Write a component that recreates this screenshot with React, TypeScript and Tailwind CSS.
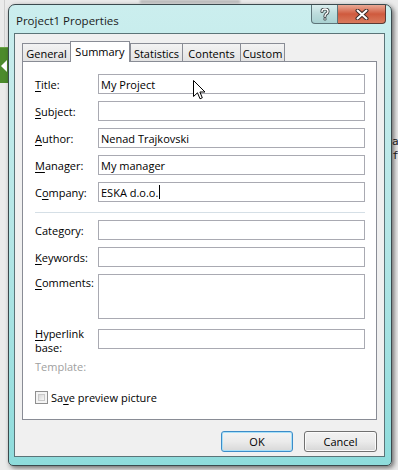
import React from "react";

const F = "font-['Segoe_UI','Open_Sans','Noto_Sans',sans-serif]";

function L({ pre = "", u, post = "" }: { pre?: string; u: string; post?: string }) {
  return (
    <span>
      {pre}
      <span className="underline underline-offset-[2px] decoration-1">{u}</span>
      {post}
    </span>
  );
}

function Field({ label, value, caret }: { label: React.ReactNode; value?: string; caret?: boolean }) {
  return (
    <div className="flex items-center h-[20px]">
      <div className="w-[63px] shrink-0 text-black">{label}</div>
      <div className="flex-1 h-[20px] border border-[#a9aab2] bg-white flex items-center pl-[2px] text-black whitespace-nowrap">
        {value}
        {caret && <span className="inline-block w-px h-[14px] bg-black ml-[1px]" />}
      </div>
    </div>
  );
}

function Tab({ label, w, selected, last }: { label: React.ReactNode; w: string; selected?: boolean; last?: boolean }) {
  if (selected) {
    return (
      <div className={`${w} h-[21px] -mb-px relative z-10 bg-white border-t border-l border-r border-[#898c95] flex justify-center pt-[2px] text-black`}>
        {label}
      </div>
    );
  }
  return (
    <div
      className={`${w} h-[18px] border-t border-l ${last ? "border-r" : ""} border-[#898c95] bg-gradient-to-b from-[#f3f3f3] to-[#e3e3e3] flex justify-center pt-[2px] text-black`}
    >
      {label}
    </div>
  );
}

export default function App() {
  return (
    <div className={`${F} relative w-[398px] h-[470px] overflow-hidden bg-[#ebebeb] text-[11px] leading-[15px]`}>
      {/* desktop background bits */}
      <div className="absolute left-0 top-[47px] w-[10px] h-[36px] bg-[#4c8a2c] border-t border-[#6aa445]">
        <svg width="10" height="36" className="absolute left-0 top-0">
          <polygon points="1,18 7,12 7,24" fill="#ffffff" />
        </svg>
      </div>
      <div className="absolute left-[4px] top-0 w-px h-[47px] bg-[#cfcfcf]" />
      <div className="absolute left-[140px] top-0 w-[100px] h-[3px] bg-[#b8b8b8] blur-[1px]" />
      <div className="absolute left-[392px] top-[135px] w-[6px] overflow-hidden font-['DejaVu_Sans_Mono',monospace] text-[11px] leading-[14px] text-[#222]">
        <div>a</div>
        <div>f</div>
      </div>

      {/* window */}
      <div className="absolute left-[8px] top-[4px] w-[384px] h-[462px] rounded-t-[7px] rounded-b-[5px] border border-[#3b4a4e] bg-gradient-to-b from-[#cbeeee] via-[#b4e6e6] to-[#8edcdc] shadow-[2px_2px_5px_rgba(0,0,0,0.55)] flex flex-col">
        {/* title bar */}
        <div className="h-[28px] flex items-start shrink-0">
          <div className="pl-[7px] pt-[8px] text-[11.5px] text-[#1b1b1b] whitespace-nowrap">Project1 Properties</div>
          <div className="ml-auto mr-[5px] flex">
            <div className="w-[27px] h-[19px] rounded-bl-[4px] border border-t-0 border-[#5d7479] bg-gradient-to-b from-[#d9eeee] via-[#bcdcdc] to-[#a9d2d2] flex items-center justify-center">
              <svg width="10" height="13" viewBox="0 0 10 13">
                <path d="M2 3.5 Q2 1 5 1 Q8 1 8 3.5 Q8 5 6 6 Q5 6.7 5 8.5" fill="none" stroke="#3c4446" strokeWidth="3.2" strokeLinecap="round" />
                <path d="M2 3.5 Q2 1 5 1 Q8 1 8 3.5 Q8 5 6 6 Q5 6.7 5 8.5" fill="none" stroke="#ffffff" strokeWidth="1.4" strokeLinecap="round" />
                <circle cx="5" cy="11" r="1.6" fill="#3c4446" />
                <circle cx="5" cy="11" r="0.8" fill="#ffffff" />
              </svg>
            </div>
            <div className="w-[48px] h-[19px] rounded-br-[4px] border border-l-0 border-t-0 border-[#5a3a34] bg-gradient-to-b from-[#e9a996] via-[#cf5a3e] to-[#d97a5d] flex items-center justify-center">
              <svg width="14" height="11" viewBox="0 0 14 11">
                <path d="M2.5 1.5 L11.5 9.5 M11.5 1.5 L2.5 9.5" stroke="#3a2a28" strokeWidth="4" strokeLinecap="round" />
                <path d="M2.5 1.5 L11.5 9.5 M11.5 1.5 L2.5 9.5" stroke="#ffffff" strokeWidth="2" strokeLinecap="round" />
              </svg>
            </div>
          </div>
        </div>

        {/* client area */}
        <div className="ml-[5px] w-[371px] h-[424px] border border-[#5b7478] bg-[#f0f0f0] flex flex-col">
          {/* tabs */}
          <div className="mt-[7px] ml-[7px] h-[20px] flex items-end">
            <Tab w="w-[48px]" label={<span>General</span>} />
            <Tab w="w-[60px]" selected label={<span>Summary</span>} />
            <Tab w="w-[52px]" label={<span>Statistics</span>} />
            <Tab w="w-[58px]" label={<span>Contents</span>} />
            <Tab w="w-[45px]" last label={<span>Custom</span>} />
          </div>

          {/* panel */}
          <div className="ml-[7px] w-[355px] h-[359px] border border-[#898c95] bg-white pt-[12px] pl-[12px] pr-[11px] flex flex-col">
            <Field label={<L u="T" post="itle:" />} value="My Project" />
            <div className="mt-[7px]">
              <Field label={<L u="S" post="ubject:" />} />
            </div>
            <div className="mt-[7px]">
              <Field label={<L u="A" post="uthor:" />} value="Nenad Trajkovski" />
            </div>
            <div className="mt-[7px]">
              <Field label={<L u="M" post="anager:" />} value="My manager" />
            </div>
            <div className="mt-[7px]">
              <Field label={<L pre="C" u="o" post="mpany:" />} value="ESKA d.o.o." caret />
            </div>
            <div className="mt-[10px] h-px bg-[#d5dfe6]" />
            <div className="mt-[7px]">
              <Field label={<L pre="Cate" u="g" post="ory:" />} />
            </div>
            <div className="mt-[7px]">
              <Field label={<L u="K" post="eywords:" />} />
            </div>
            <div className="mt-[7px] flex items-start h-[45px]">
              <div className="w-[63px] shrink-0 pt-[1px] text-black">
                <L u="C" post="omments:" />
              </div>
              <div className="flex-1 h-[45px] border border-[#a9aab2] bg-white" />
            </div>
            <div className="mt-[10px] flex items-start h-[20px]">
              <div className="w-[63px] shrink-0 -mt-[2px] text-black">
                <div className="h-[14px] leading-[14px]">
                  <L u="H" post="yperlink" />
                </div>
                <div className="h-[14px] leading-[14px]">base:</div>
              </div>
              <div className="flex-1 h-[20px] border border-[#a9aab2] bg-white" />
            </div>
            <div className="mt-[10px] h-[15px] text-[#a0a0a0]">Template:</div>
            <div className="mt-[16px] flex items-center h-[15px]">
              <div className="w-[13px] h-[13px] border border-[#8f8f8f] bg-[#f4f4f4] p-[2px]">
                <div className="w-full h-full border border-[#c9c9c9] bg-gradient-to-br from-[#d8d8d8] to-[#f7f7f7]" />
              </div>
              <div className="ml-[3px] text-black">
                <L pre="Sa" u="v" post="e preview picture" />
              </div>
            </div>
          </div>

          {/* buttons */}
          <div className="mt-[11px] flex justify-end pr-[7px] gap-[11px]">
            <div className="w-[72px] h-[21px] rounded-[3px] border border-[#3c8cc8] shadow-[inset_0_0_0_1px_#a8e0f8] bg-gradient-to-b from-[#f4f4f4] via-[#ebebeb] to-[#d8d8d8] flex items-center justify-center text-black">
              OK
            </div>
            <div className="w-[73px] h-[21px] rounded-[3px] border border-[#707070] shadow-[inset_0_0_0_1px_#fbfbfb] bg-gradient-to-b from-[#f2f2f2] via-[#ebebeb] to-[#d6d6d6] flex items-center justify-center text-black">
              Cancel
            </div>
          </div>
        </div>
      </div>

      {/* mouse cursor */}
      <svg className="absolute left-[193px] top-[80px]" width="13" height="20" viewBox="0 0 13 20">
        <path d="M0.5 0.5 L0.5 16.5 L4.5 12.8 L7 18.8 L9.3 17.8 L6.9 12 L12 12 Z" fill="#ffffff" stroke="#000000" strokeWidth="1" strokeLinejoin="miter" />
      </svg>
    </div>
  );
}
